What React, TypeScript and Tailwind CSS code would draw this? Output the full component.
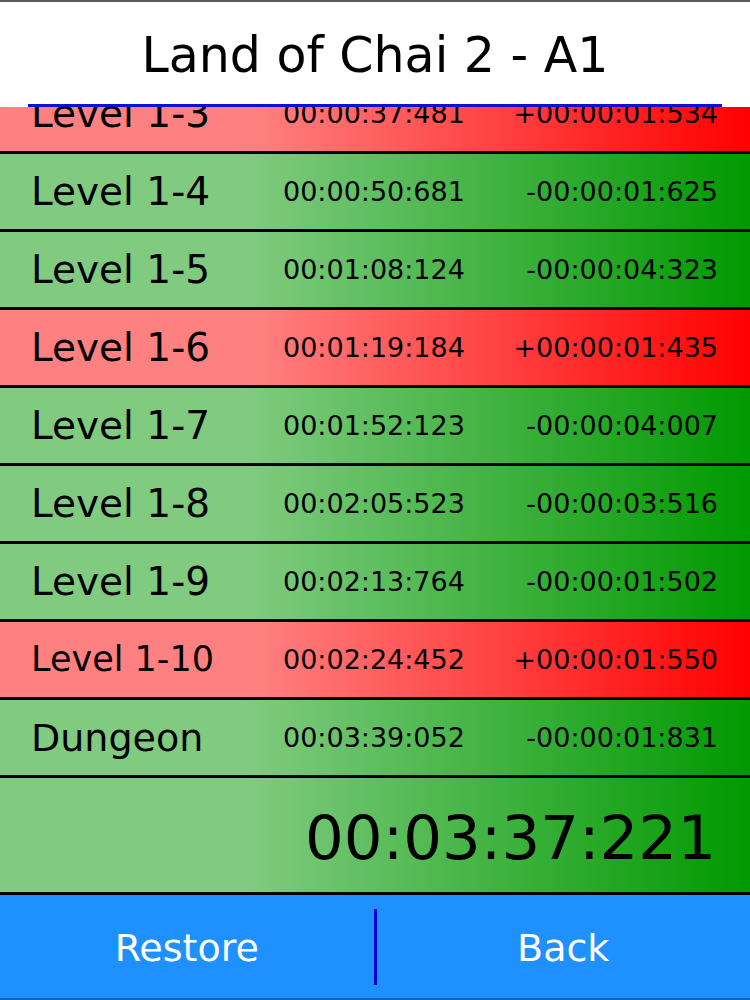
import React from 'react';

type Split = { name: string; time: string; delta: string; ahead: boolean; size?: string };

const splits: Split[] = [
  { name: 'Level 1-3', time: '00:00:37:481', delta: '+00:00:01:534', ahead: false },
  { name: 'Level 1-4', time: '00:00:50:681', delta: '-00:00:01:625', ahead: true },
  { name: 'Level 1-5', time: '00:01:08:124', delta: '-00:00:04:323', ahead: true },
  { name: 'Level 1-6', time: '00:01:19:184', delta: '+00:00:01:435', ahead: false },
  { name: 'Level 1-7', time: '00:01:52:123', delta: '-00:00:04:007', ahead: true },
  { name: 'Level 1-8', time: '00:02:05:523', delta: '-00:00:03:516', ahead: true },
  { name: 'Level 1-9', time: '00:02:13:764', delta: '-00:00:01:502', ahead: true },
  { name: 'Level 1-10', time: '00:02:24:452', delta: '+00:00:01:550', ahead: false, size: 'text-[35px]' },
  { name: 'Dungeon', time: '00:03:39:052', delta: '-00:00:01:831', ahead: true, size: 'text-[38px]' },
];

const green = 'bg-[linear-gradient(to_right,#80cb80_0%,#80cb80_33%,#009900_100%)]';
const red = 'bg-[linear-gradient(to_right,#ff8080_0%,#ff8080_34%,#ff0000_100%)]';

const SplitRow: React.FC<{ split: Split }> = ({ split }) => (
  <div
    className={`h-[78px] shrink-0 flex items-center border-b-[3px] border-black text-black ${
      split.ahead ? green : red
    }`}
  >
    <span className={`w-[283px] pl-[31px] leading-none ${split.size ?? 'text-[39px]'}`}>{split.name}</span>
    <span className="w-[200px] text-[27px] leading-none">{split.time}</span>
    <span className="flex-1 pr-[32px] text-right text-[27px] leading-none">{split.delta}</span>
  </div>
);

export default function App() {
  return (
    <div className="w-[750px] h-[1000px] flex flex-col overflow-hidden bg-white font-['DejaVu_Sans',sans-serif]">
      {/* Title */}
      <div className="h-[107px] shrink-0 flex flex-col border-t-2 border-[#5a5a5a] bg-white">
        <div className="flex-1 flex items-center justify-center text-[49px] text-black leading-none pt-1">
          Land of Chai 2 - A1
        </div>
        <div className="mx-[28px] h-[3px] bg-[#1010d0]" />
      </div>

      {/* Splits list (scrolled) */}
      <div className="h-[671px] shrink-0 overflow-hidden">
        <div className="-mt-[31px] flex flex-col">
          {splits.map((s) => (
            <SplitRow key={s.name} split={s} />
          ))}
        </div>
      </div>

      {/* Total */}
      <div className={`h-[117px] shrink-0 flex items-center justify-end pr-[34px] border-b-[3px] border-black ${green}`}>
        <span className="text-[61px] leading-none text-black pt-1">00:03:37:221</span>
      </div>

      {/* Buttons */}
      <div className="flex-1 flex items-center bg-[#1e90ff] border-b-2 border-[#1a5fb0]">
        <button className="flex-1 h-full flex items-center justify-center text-white text-[38px] pt-1">Restore</button>
        <div className="w-[3px] h-[76px] bg-[#0000dd]" />
        <button className="flex-1 h-full flex items-center justify-center text-white text-[38px] pt-1">Back</button>
      </div>
    </div>
  );
}
